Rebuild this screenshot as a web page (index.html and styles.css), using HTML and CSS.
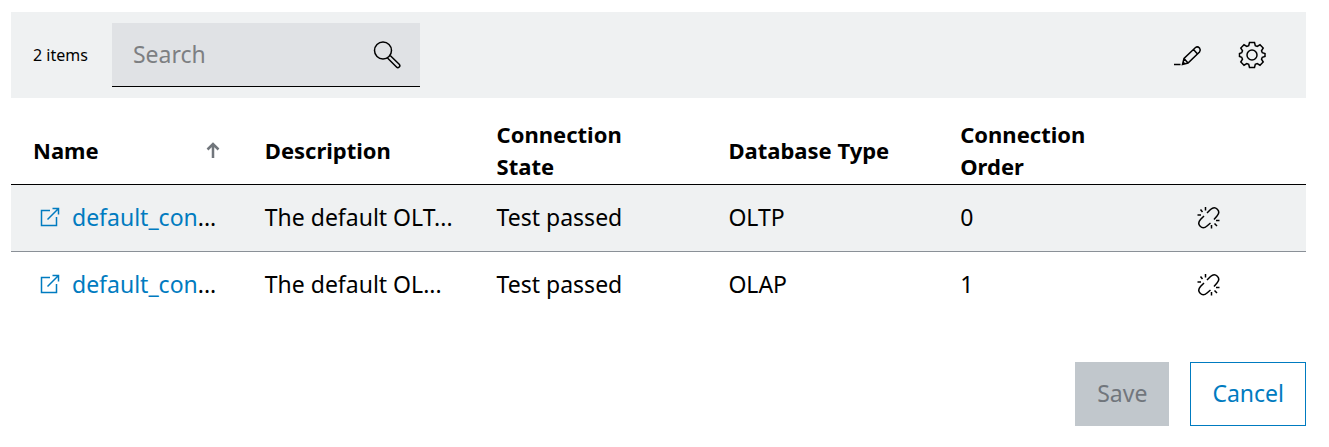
FILE: index.html
```
<!DOCTYPE html>
<html lang="en">

<head>
    <meta charset="UTF-8">
    <meta name="viewport" content="width=device-width, initial-scale=1.0">
    <title>Database Connections</title>
    <link rel="stylesheet" href="styles.css">
</head>

<body>
    <svg class="sprite" aria-hidden="true">
        <symbol id="icon-open" viewBox="0 0 20 20">
            <path d="M10 3.5H1.5V18.5H16.5V10M7.5 12.5L18 2M12.500 1.500H18.500V7.500" />
        </symbol>
        <symbol id="icon-unlink" viewBox="0 0 24 24">
            <path d="M11 8l3.500-3.500c5-4.500 11 1.500 6.500 6.500L18 14.500M8 11l-3.500 3.500c-4.500 5 1.500 11 6.500 6.500L14.500 18M9.500 2v3.500M4.500 4.500L6.500 7M1.500 10h3.500M15.500 20v3.500M18.500 18.500L21 21M20 15.500h3.500" />
        </symbol>
    </svg>

    <main class="connections">
        <div class="toolbar">
            <span class="count">2 items</span>
            <div class="search">
                <input type="search" class="search-input" placeholder="Search" aria-label="Search">
                <button type="button" class="icon-button" aria-label="Search">
                    <svg class="icon icon-search" viewBox="0 0 30 30">
                        <circle cx="11" cy="11.500" r="8.500" />
                        <path d="M15.500 19L24.500 28a1.900 1.900 0 0 0 2.700-2.700L18.200 16.500" />
                    </svg>
                </button>
            </div>
            <div class="actions">
                <button type="button" class="icon-button" aria-label="Edit">
                    <svg class="icon" viewBox="0 0 28 28">
                        <path d="M0 23.500H6.500M8.500 23.500L10 17.500L21.500 6.500Q23.500 5 25.500 7Q27 9 25.500 11L14 22ZM10 17.500L14 22M19.500 8.500L23.500 13M8.500 23.500L10.500 21.500" />
                    </svg>
                </button>
                <button type="button" class="icon-button" aria-label="Settings">
                    <svg class="icon" viewBox="0 0 28 28">
                        <circle cx="14" cy="14" r="5" />
                        <path d="M11.500 1.500h5l.8 3.200 1.900.8 2.800-1.700 3.200 3.200-1.700 2.800.8 1.900 2.700.8v3l-2.700.8-.8 1.900 1.700 2.800-3.200 3.200-2.800-1.700-1.900.8-.8 3.200h-5l-.8-3.200-1.900-.8-2.800 1.700-3.200-3.200 1.700-2.800-.8-1.900-2.200-.8v-3l2.200-.8.8-1.900-1.700-2.800 3.200-3.200 2.800 1.700 1.900-.8z" />
                    </svg>
                </button>
            </div>
        </div>

        <table class="table">
            <thead>
                <tr>
                    <th scope="col">
                        <div class="sortable">
                            Name
                            <svg class="sort-arrow" viewBox="0 0 14 16">
                                <path d="M7 16V2M1.500 7.500L7 2L12.500 7.500" />
                            </svg>
                        </div>
                    </th>
                    <th scope="col">Description</th>
                    <th scope="col">Connection State</th>
                    <th scope="col">Database Type</th>
                    <th scope="col">Connection Order</th>
                    <td class="row-action"></td>
                </tr>
            </thead>
            <tbody>
                <tr>
                    <td>
                        <div class="name">
                            <svg class="icon-open"><use href="#icon-open" /></svg>
                            <span><a href="#">default_con</a>...</span>
                        </div>
                    </td>
                    <td>The default OLT...</td>
                    <td>Test passed</td>
                    <td>OLTP</td>
                    <td>0</td>
                    <td class="row-action">
                        <button type="button" class="icon-button" aria-label="Disconnect">
                            <svg class="icon-unlink"><use href="#icon-unlink" /></svg>
                        </button>
                    </td>
                </tr>
                <tr>
                    <td>
                        <div class="name">
                            <svg class="icon-open"><use href="#icon-open" /></svg>
                            <span><a href="#">default_con</a>...</span>
                        </div>
                    </td>
                    <td>The default OL...</td>
                    <td>Test passed</td>
                    <td>OLAP</td>
                    <td>1</td>
                    <td class="row-action">
                        <button type="button" class="icon-button" aria-label="Disconnect">
                            <svg class="icon-unlink"><use href="#icon-unlink" /></svg>
                        </button>
                    </td>
                </tr>
            </tbody>
        </table>

        <div class="footer">
            <button type="button" class="button button-save" disabled>Save</button>
            <button type="button" class="button button-cancel">Cancel</button>
        </div>
    </main>
</body>

</html>
```
FILE: styles.css
```
* {
    box-sizing: border-box;
}

body {
    margin: 0;
    padding: 12px 23px 20px 11px;
    background: #fff;
    color: #000;
    font-family: "Noto Sans", sans-serif;
    font-size: 23px;
    line-height: 32px;
}

button,
input {
    font: inherit;
}

svg {
    display: block;
    fill: none;
    stroke: currentColor;
}

.sprite {
    display: none;
}

.toolbar {
    display: flex;
    align-items: center;
    gap: 24px;
    padding: 11px 40px 11px 22px;
    background: #eff1f2;
}

.count {
    font-size: 16px;
}

.search {
    display: flex;
    align-items: center;
    width: 308px;
    height: 64px;
    padding: 0 18px 2px 21px;
    background: #e0e2e5;
    border-bottom: 1px solid #000;
}

.search-input {
    flex: 1;
    min-width: 0;
    padding: 0;
    border: 0;
    outline: 0;
    background: transparent;
}

.search-input::placeholder {
    color: #7d7f82;
    opacity: 1;
}

.icon-button {
    display: block;
    padding: 0;
    border: 0;
    background: transparent;
    color: inherit;
    cursor: pointer;
}

.icon {
    width: 28px;
    height: 28px;
    stroke-width: 1.5;
}

.icon-search {
    width: 30px;
    height: 30px;
}

.actions {
    display: flex;
    align-items: center;
    gap: 36px;
    margin-left: auto;
}

.table {
    width: 100%;
    table-layout: fixed;
    border-collapse: separate;
    border-spacing: 0;
}

.table th,
.table td {
    padding: 0 22px;
    text-align: left;
}

.table th {
    width: 17.9%;
    font-size: 22px;
}

.table thead th,
.table thead td {
    padding-top: 20px;
    padding-bottom: 2px;
    border-bottom: 1px solid #000;
}

.table tbody td {
    height: 67px;
    padding-bottom: 2px;
    border-bottom: 1px solid transparent;
    white-space: nowrap;
}

.table tbody tr:first-child td {
    background: #eff1f2;
    border-bottom-color: #8a9097;
}

.sortable {
    display: flex;
    align-items: center;
    justify-content: space-between;
}

.sort-arrow {
    width: 14px;
    height: 16px;
    margin-right: 1px;
    color: #71767c;
    stroke-width: 2.5;
}

.name {
    display: flex;
    align-items: center;
    gap: 12px;
    padding-left: 7px;
}

.name a {
    color: #007bc0;
    text-decoration: none;
}

.icon-open {
    flex: none;
    width: 20px;
    height: 20px;
    color: #007bc0;
    stroke-width: 1.5;
}

.table .row-action {
    padding-left: 26px;
}

.icon-unlink {
    width: 24px;
    height: 24px;
    stroke-width: 1.5;
}

.footer {
    display: flex;
    justify-content: flex-end;
    gap: 21px;
    margin-top: 43px;
}

.button {
    height: 64px;
    padding: 0 21px 2px;
    border: 1px solid #007bc0;
    background: #fff;
    color: #007bc0;
}

.button-save {
    border-color: #c1c7cc;
    background: #c1c7cc;
    color: #71767c;
}
```
